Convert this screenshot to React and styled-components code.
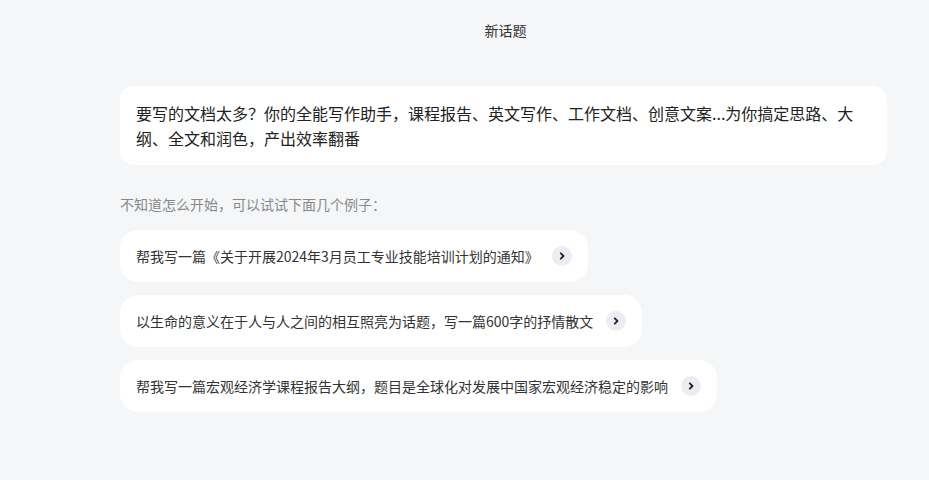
import styled, { createGlobalStyle } from 'styled-components';

const GlobalStyle = createGlobalStyle`
  html, body {
    margin: 0;
    padding: 0;
    background: #f5f6f8;
  }
  body {
    font-family: "Noto Sans CJK SC", "Noto Sans", sans-serif;
    color: #222;
  }
`;

const Page = styled.div`
  width: 929px;
  height: 480px;
  background: #f5f6f8;
  box-sizing: border-box;
  padding-left: 120px;
  overflow: hidden;
`;

const Column = styled.div`
  width: 767px;
  display: flex;
  flex-direction: column;
`;

const Title = styled.div`
  height: 60px;
  display: flex;
  align-items: center;
  justify-content: center;
  padding-left: 4px;
  font-size: 14px;
  color: #333;
  line-height: 20px;
`;

const IntroCard = styled.div`
  margin-top: 26px;
  background: #fff;
  border-radius: 14px;
  padding: 15px 16px 14px;
  font-size: 16px;
  line-height: 25px;
  color: #222;
`;

const Hint = styled.div`
  margin-top: 29px;
  font-size: 14px;
  line-height: 20px;
  color: #888;
`;

const Examples = styled.div`
  margin-top: 16px;
  display: flex;
  flex-direction: column;
  align-items: flex-start;
  gap: 13px;
`;

const Chip = styled.div`
  display: flex;
  align-items: center;
  gap: 13px;
  height: 52px;
  box-sizing: border-box;
  padding: 0 16px;
  background: #fff;
  border-radius: 18px;
  font-size: 14px;
  color: #333;
  cursor: pointer;
`;

const Arrow = styled.span`
  width: 20px;
  height: 20px;
  border-radius: 50%;
  background: #ecedf2;
  display: flex;
  align-items: center;
  justify-content: center;
  flex-shrink: 0;
`;

const examples = [
  '帮我写一篇《关于开展2024年3月员工专业技能培训计划的通知》',
  '以生命的意义在于人与人之间的相互照亮为话题，写一篇600字的抒情散文',
  '帮我写一篇宏观经济学课程报告大纲，题目是全球化对发展中国家宏观经济稳定的影响',
];

function Chevron() {
  return (
    <svg width="8" height="8" viewBox="0 0 8 8">
      <polyline points="2.8,1.3 5.5,4 2.8,6.7" fill="none" stroke="#222" strokeWidth="1.8" strokeLinecap="round" strokeLinejoin="round" />
    </svg>
  );
}

export default function App() {
  return (
    <>
      <GlobalStyle />
      <Page>
        <Column>
          <Title>新话题</Title>
          <IntroCard>
            要写的文档太多？你的全能写作助手，课程报告、英文写作、工作文档、创意文案...为你搞定思路、大纲、全文和润色，产出效率翻番
          </IntroCard>
          <Hint>不知道怎么开始，可以试试下面几个例子：</Hint>
          <Examples>
            {examples.map((text) => (
              <Chip key={text}>
                {text}
                <Arrow>
                  <Chevron />
                </Arrow>
              </Chip>
            ))}
          </Examples>
        </Column>
      </Page>
    </>
  );
}
